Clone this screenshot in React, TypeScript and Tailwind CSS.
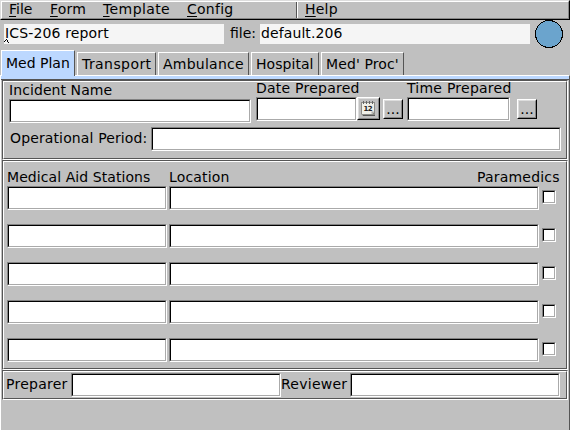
import React from "react";

function Field({ className }: { className: string }) {
  return (
    <div
      className={`h-6 shrink-0 border border-t-[#828282] border-l-[#828282] border-r-white border-b-white ${className}`}
    >
      <div className="h-full border border-t-black border-l-black border-r-[#aaaaaa] border-b-[#aaaaaa] bg-white" />
    </div>
  );
}

function Check() {
  return (
    <div className="mt-1 ml-[3px] size-3.5 shrink-0 border border-t-[#828282] border-l-[#828282] border-r-white border-b-white">
      <div className="h-full border border-t-black border-l-black border-r-[#aaaaaa] border-b-[#aaaaaa] bg-white" />
    </div>
  );
}

function Groove({ className, children }: { className: string; children: React.ReactNode }) {
  return (
    <div className={`w-[566px] shrink-0 border border-t-[#555555] border-l-[#555555] border-r-white border-b-white ${className}`}>
      <div className="h-full border border-t-white border-l-white border-r-[#555555] border-b-[#555555]">{children}</div>
    </div>
  );
}

function Dots({ className }: { className: string }) {
  return (
    <button
      className={`block h-5 w-5 shrink-0 border border-t-white border-l-white border-r-black border-b-black ${className}`}
    >
      <span className="block h-full border border-t-[#dddddd] border-l-[#dddddd] border-r-[#888888] border-b-[#888888] text-center leading-[17px]">
        ...
      </span>
    </button>
  );
}

function Calendar() {
  return (
    <button className="h-[23px] w-[23px] shrink-0 border border-t-white border-l-white border-r-black border-b-black">
      <span className="flex h-full items-center justify-center border border-t-[#dddddd] border-l-[#dddddd] border-r-[#888888] border-b-[#888888]">
        <svg width="17" height="17" viewBox="0 0 17 17">
          <path d="M2 14h13v2H3z" fill="#555" />
          <path d="M1 2h14v13H2l-1-1z" fill="#8c8c88" />
          <path d="M2 3h12v9l-2 2H2z" fill="#efefe8" />
          <path d="M11.500 14v-2.500h2.500z" fill="#aaa" />
          <path d="M3.500 1v3M6.500 1v3M9.500 1v3M12.500 1v3" stroke="#666" />
          <text x="3.500" y="11" fontSize="7" fontWeight="bold" textLength="9" fill="#222">12</text>
        </svg>
      </span>
    </button>
  );
}

const menus = [
  { k: "F", r: "ile", c: "w-[41px]" },
  { k: "F", r: "orm", c: "w-[53px] tracking-[0.2px]" },
  { k: "T", r: "emplate", c: "w-[84px] tracking-[0.4px]" },
  { k: "C", r: "onfig", c: "w-[109px] tracking-[0.25px]" },
];

const tabs = [
  { t: "Transport", c: "w-[79px] tracking-[0.42px]" },
  { t: "Ambulance", c: "w-[91px] tracking-[0.25px]" },
  { t: "Hospital", c: "w-[68px] tracking-[0.05px]" },
  { t: "Med' Proc'", c: "w-[83px] tracking-[0.12px]" },
];

export default function App() {
  return (
    <div className="flex h-[430px] w-[570px] flex-col overflow-hidden bg-[#c0c0c0] font-['DejaVu_Sans',sans-serif] text-[14px] leading-4 text-black">
      <nav className="h-5 shrink-0 border border-t-[#dddddd] border-l-[#dddddd] border-r-black border-b-black">
        <div className="flex h-full border border-t-white border-l-white border-r-[#888888] border-b-[#888888] pl-[7px]">
          {menus.map((m) => (
            <div key={m.k + m.r} className={`shrink-0 leading-[14px] ${m.c}`}>
              <span className="underline decoration-1 underline-offset-2">{m.k}</span>
              {m.r}
            </div>
          ))}
          <div className="h-full w-0.5 border-l border-r border-l-[#555555] border-r-white" />
          <div className="ml-[7px] leading-[14px] tracking-[0.2px]">
            <span className="underline decoration-1 underline-offset-2">H</span>elp
          </div>
        </div>
      </nav>

      <header className="flex h-[30px] shrink-0 pl-1">
        <div className="mt-1 h-5 w-[220px] bg-[#f5f5f5] pl-px leading-[19px] tracking-[0.15px]">
          <span className="relative">
            ICS-206 report
            <svg className="absolute -left-px top-[14px]" width="5" height="4" shapeRendering="crispEdges">
              <path d="M0 2h1v1H0zM1 1h1v1H1zM2 0h1v1H2zM3 1h1v1H3zM3 2h1v1H3zM4 3h1v1H4z" fill="black" />
            </svg>
          </span>
        </div>
        <div className="mt-1 w-9 pl-1.5 leading-[19px]">file:</div>
        <div className="mt-1 h-5 w-[270px] bg-[#f5f5f5] pl-px leading-[19px] tracking-[0.1px]">default.206</div>
        <svg className="ml-[5px]" width="28" height="28" shapeRendering="crispEdges">
          <circle cx="14" cy="14" r="13.5" fill="#6ba4cd" stroke="black" />
        </svg>
      </header>

      <div className="flex h-[25px] shrink-0 items-end pl-px">
        <div className="relative mr-[2px] -mb-px h-[26px] w-[74px] border-t border-r border-l border-t-white border-r-[#555555] border-l-white bg-[#bcd8ff] pl-1 leading-[25px]">
          Med Plan
        </div>
        {tabs.map((t) => (
          <div
            key={t.t}
            className={`mr-[2px] h-[23px] shrink-0 whitespace-nowrap border-t border-r border-l border-t-white border-r-[#555555] border-l-white pl-1 leading-[23px] ${t.c}`}
          >
            {t.t}
          </div>
        ))}
      </div>

      <main className="flex h-[355px] shrink-0 flex-col border-t border-r border-l border-t-white border-r-[#555555] border-l-white">
        <div className="h-[3px] shrink-0 bg-[#bcd8ff]" />
        <div className="h-px shrink-0 bg-[#555555]" />
        <div className="pl-px">
          <Groove className="h-20">
            <div className="flex h-[45px] items-start">
              <div className="w-[252px] pl-[5px]">
                <div className="h-[17px] leading-4 tracking-[0.08px]">Incident Name</div>
                <Field className="w-[242px]" />
              </div>
              <div className="w-[101px]">
                <div className="h-[15px] whitespace-nowrap leading-[13px] tracking-[0.24px]">Date Prepared</div>
                <Field className="w-[101px]" />
              </div>
              <div className="mt-[15px]">
                <Calendar />
              </div>
              <Dots className="mt-[17px] ml-[3px]" />
              <div className="ml-1 w-[103px]">
                <div className="h-[15px] whitespace-nowrap leading-[13px] tracking-[0.24px]">Time Prepared</div>
                <Field className="w-[103px]" />
              </div>
              <Dots className="mt-[17px] ml-[7px]" />
            </div>
            <div className="flex">
              <div className="h-6 w-[147px] whitespace-nowrap pl-1.5 leading-[22px] tracking-[0.13px]">Operational Period:</div>
              <Field className="w-[410px]" />
            </div>
          </Groove>
          <Groove className="h-[210px]">
            <div className="flex h-6 pl-[3px] pt-[7px]">
              <div className="w-[162px] tracking-[0.07px]">Medical Aid Stations</div>
              <div className="w-[308px] tracking-[0.15px]">Location</div>
              <div className="tracking-[0.2px]">Paramedics</div>
            </div>
            <div className="flex flex-col gap-[14px] pl-[3px]">
              {[0, 1, 2, 3, 4].map((i) => (
                <div key={i} className="flex items-start">
                  <Field className="w-[160px]" />
                  <Field className="ml-[2px] w-[370px]" />
                  <Check />
                </div>
              ))}
            </div>
          </Groove>
          <Groove className="h-[30px]">
            <div className="flex pl-[2px] pt-px leading-[22px]">
              <div className="w-[65px] tracking-[0.25px]">Preparer</div>
              <Field className="w-[210px]" />
              <div className="w-[69px] tracking-[0.25px]">Reviewer</div>
              <Field className="w-[210px]" />
            </div>
          </Groove>
        </div>
      </main>
    </div>
  );
}
